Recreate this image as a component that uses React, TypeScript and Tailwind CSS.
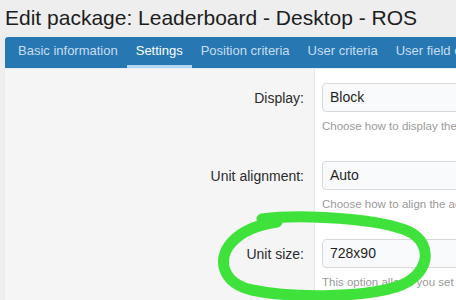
import React from "react";

const tabs = ["Basic information", "Settings", "Position criteria", "User criteria", "User field criteria"];

const rows = [
  { label: "Display:", value: "Block", hint: "Choose how to display the unit on the page." },
  { label: "Unit alignment:", value: "Auto", hint: "Choose how to align the ad unit inside its container." },
  { label: "Unit size:", value: "728x90", hint: "This option allows you set the size of the unit." },
];

const App = () => {
  return (
    <div className="relative w-[456px] h-[300px] overflow-hidden bg-[#eeeeee] font-['Liberation_Sans',Arial,sans-serif]">
      {/* title */}
      <h1 className="pl-[5px] pt-[5px] h-[37px] text-[21px] leading-[26px] text-[#1d1d1d] whitespace-nowrap">
        Edit package: Leaderboard - Desktop - ROS
      </h1>

      <div className="ml-[5px] bg-white">
        {/* tabs */}
        <div className="flex h-[31px] bg-[#2677b2] pl-[4px] rounded-tl-[3px] whitespace-nowrap">
          {tabs.map((t, i) => (
            <div
              key={t}
              className={
                "px-[9px] flex items-center text-[13px] border-b-[3px] " +
                (i === 1 ? "text-white border-[#b3d7f2]" : "text-[#c8def0] border-transparent")
              }
            >
              {t}
            </div>
          ))}
        </div>

        {/* form rows */}
        <div className="border-t border-[#e4eef6]">
          {rows.map((r) => (
            <div key={r.label} className="flex h-[78px]">
              <div className="w-[310px] shrink-0 bg-[#f5f5f5] border-r border-[#e6e6e6] pt-[15px] pr-[10px] text-right">
                <div className="h-[29px] flex items-center justify-end text-[14px] text-[#2b2b2b]">{r.label}</div>
              </div>
              <div className="flex-1 pt-[14px] pl-[7px] whitespace-nowrap">
                <div className="h-[29px] w-[300px] rounded-[4px] border border-[#d8d8d8] bg-[#f9fafb] flex items-center pl-[7px] text-[14px] text-[#1f1f1f]">
                  {r.value}
                </div>
                <p className="mt-[6px] text-[11.5px] leading-[16px] text-[#9a9a9a]">{r.hint}</p>
              </div>
            </div>
          ))}
        </div>
      </div>

      {/* hand-drawn highlight */}
      <svg className="absolute left-0 top-0" width="456" height="300" viewBox="0 0 456 300">
        <path
          d="M 262 219 C 300 214, 380 218, 410 232 C 434 245, 430 276, 396 287 C 360 298, 290 298, 252 290 C 221 283, 217 258, 232 242 C 242 231, 256 225, 277 222"
          fill="none"
          stroke="#3fe23a"
          strokeWidth="11"
          strokeLinecap="round"
        />
      </svg>
    </div>
  );
};

export default App;
